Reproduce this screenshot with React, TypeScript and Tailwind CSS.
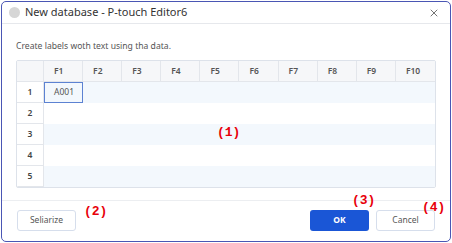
import { X } from 'lucide-react'

const cols = ['F1', 'F2', 'F3', 'F4', 'F5', 'F6', 'F7', 'F8', 'F9', 'F10']
const rows = [1, 2, 3, 4, 5]

function Note({ label, className }: { label: string; className: string }) {
  return (
    <span
      className={`absolute text-[13px] font-bold leading-[14px] text-[#e8000b] ${className}`}
      style={{ fontFamily: '"Liberation Mono", "DejaVu Sans Mono", monospace' }}
    >
      {label}
    </span>
  )
}

export default function App() {
  return (
    <div
      className="relative h-[243px] w-[452px] bg-white"
      style={{ fontFamily: '"Segoe UI", "Noto Sans", "Open Sans", sans-serif' }}
    >
      <div className="ml-px mt-px flex h-[241px] w-[450px] flex-col rounded-[5px] border border-[#4a56b4] bg-white">
        <div className="flex h-[22px] shrink-0 items-center border-b border-[#e6e8ec] pl-[7px] pr-[10px]">
          <div className="h-[11px] w-[11px] rounded-full bg-[#d6d6d6]" />
          <span className="ml-[5px] text-[11px] text-[#333]">New database - P-touch Editor6</span>
          <X className="ml-auto h-[12px] w-[12px] text-[#444]" strokeWidth={1.5} />
        </div>

        <div className="flex flex-1 flex-col px-[14px]">
          <p className="mt-[15px] text-[8.6px] leading-[14px] text-[#555]">Create labels woth text using tha data.</p>

          <div className="mt-[7px] overflow-hidden rounded-[2px] border border-[#dde2ea]">
            <div className="grid h-[21px] grid-cols-[27px_repeat(10,1fr)] border-b border-[#e3e6eb] bg-[#f6f7f9]">
              <div className="border-r border-[#e3e6eb]" />
              {cols.map((c) => (
                <div
                  key={c}
                  className="flex items-center border-r border-[#e3e6eb] pl-[10px] text-[8.5px] font-semibold text-[#555] last:border-r-0"
                >
                  {c}
                </div>
              ))}
            </div>
            {rows.map((r) => (
              <div key={r} className="grid h-[21px] grid-cols-[27px_1fr]">
                <div className="flex items-center justify-center border-r border-b border-[#e3e6eb] bg-white text-[8.5px] font-semibold text-[#444] last:border-b-0">
                  {r}
                </div>
                <div className={`grid grid-cols-10 ${r % 2 === 1 ? 'bg-[#f3f8fd]' : 'bg-white'}`}>
                  {r === 1 && (
                    <div className="flex items-center border border-[#5c82d2] pl-[9px] text-[8.5px] text-[#555]">A001</div>
                  )}
                </div>
              </div>
            ))}
          </div>
        </div>

        <div className="flex h-[41px] shrink-0 items-start border-t border-[#eceef1] px-[15px] pt-[9px]">
          <button className="h-[21px] w-[59px] rounded-[3px] border border-[#d6deec] bg-white text-[8.5px] text-[#555]">
            Seliarize
          </button>
          <button className="ml-auto h-[21px] w-[59px] rounded-[3px] bg-[#1a56d6] text-[8.5px] font-bold text-white">
            OK
          </button>
          <button className="ml-[7px] h-[21px] w-[59px] rounded-[3px] border border-[#d6deec] bg-white text-[8.5px] text-[#555]">
            Cancel
          </button>
        </div>
      </div>

      <Note label="(1)" className="left-[217px] top-[125px]" />
      <Note label="(2)" className="left-[84px] top-[204px]" />
      <Note label="(3)" className="left-[352px] top-[193px]" />
      <Note label="(4)" className="left-[422px] top-[200px]" />
    </div>
  )
}
